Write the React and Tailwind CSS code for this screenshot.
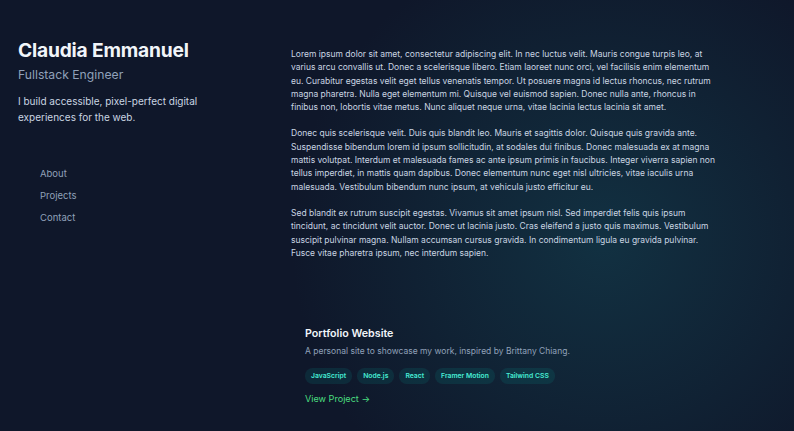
import React from 'react';

const tags = ['JavaScript', 'Node.js', 'React', 'Framer Motion', 'Tailwind CSS'];

const paragraphs = [
    'Lorem ipsum dolor sit amet, consectetur adipiscing elit. In nec luctus velit. Mauris congue turpis leo, at varius arcu convallis ut. Donec a scelerisque libero. Etiam laoreet nunc orci, vel facilisis enim elementum eu. Curabitur egestas velit eget tellus venenatis tempor. Ut posuere magna id lectus rhoncus, nec rutrum magna pharetra. Nulla eget elementum mi. Quisque vel euismod sapien. Donec nulla ante, rhoncus in finibus non, lobortis vitae metus. Nunc aliquet neque urna, vitae lacinia lectus lacinia sit amet.',
    'Donec quis scelerisque velit. Duis quis blandit leo. Mauris et sagittis dolor. Quisque quis gravida ante. Suspendisse bibendum lorem id ipsum sollicitudin, at sodales dui finibus. Donec malesuada ex at magna mattis volutpat. Interdum et malesuada fames ac ante ipsum primis in faucibus. Integer viverra sapien non tellus imperdiet, in mattis quam dapibus. Donec elementum nunc eget nisl ultricies, vitae iaculis urna malesuada. Vestibulum bibendum nunc ipsum, at vehicula justo efficitur eu.',
    'Sed blandit ex rutrum suscipit egestas. Vivamus sit amet ipsum nisl. Sed imperdiet felis quis ipsum tincidunt, ac tincidunt velit auctor. Donec ut lacinia justo. Cras eleifend a justo quis maximus. Vestibulum suscipit pulvinar magna. Nullam accumsan cursus gravida. In condimentum ligula eu gravida pulvinar. Fusce vitae pharetra ipsum, nec interdum sapien.',
];

const App = () => {
    return (
        <div className="w-[794px] h-[431px] overflow-hidden bg-[#0f172a] bg-[radial-gradient(circle_at_76%_56%,rgba(20,70,85,0.55),rgba(15,23,42,0)_48%)] font-['Inter',sans-serif] antialiased">
            <div className="flex">
                {/* Left column */}
                <header className="w-[291px] shrink-0 pl-[18px] pt-[37px]">
                    <h1 className="text-[19.2px] leading-[26px] font-bold tracking-[-0.01em] text-slate-100">Claudia Emmanuel</h1>
                    <h2 className="mt-[3px] text-[12.2px] leading-[18px] text-slate-400">Fullstack Engineer</h2>
                    <p className="mt-[9px] w-[190px] text-[10px] leading-[16px] text-slate-300">
                        I build accessible, pixel-perfect digital experiences for the web.
                    </p>
                    <nav className="mt-[42px] pl-[22px] flex flex-col gap-[9px]">
                        <a className="text-[9.5px] leading-[13px] text-slate-400">About</a>
                        <a className="text-[9.5px] leading-[13px] text-slate-400">Projects</a>
                        <a className="text-[9.5px] leading-[13px] text-slate-400">Contact</a>
                    </nav>
                </header>

                {/* Right column */}
                <main className="w-[428px] pt-[48px]">
                    <section className="flex flex-col gap-[13px]">
                        {paragraphs.map((p, i) => (
                            <p key={i} className="text-[8.5px] leading-[13.3px] text-slate-300">{p}</p>
                        ))}
                    </section>

                    <section className="mt-[66px] pl-[14px]">
                        <h3 className="text-[10.7px] leading-[15px] font-semibold text-slate-100">Portfolio Website</h3>
                        <p className="mt-[4px] text-[8.5px] leading-[13px] text-slate-400">
                            A personal site to showcase my work, inspired by Brittany Chiang.
                        </p>
                        <ul className="mt-[10px] flex gap-[5px]">
                            {tags.map((t) => (
                                <li key={t} className="rounded-full bg-teal-400/10 px-[6px] h-[16px] flex items-center text-[6.8px] font-semibold text-teal-300">
                                    {t}
                                </li>
                            ))}
                        </ul>
                        <a className="mt-[7px] inline-block text-[9.1px] leading-[13px] text-[#4ade80]">View Project →</a>
                    </section>
                </main>
            </div>
        </div>
    );
};

export default App;
